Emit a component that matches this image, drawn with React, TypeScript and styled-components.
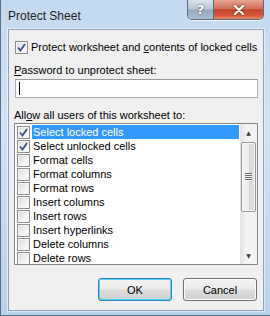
import styled, { createGlobalStyle } from "styled-components";

const GlobalStyle = createGlobalStyle`
    html, body {
        margin: 0;
        padding: 0;
        background: #c9def3;
    }
    * {
        box-sizing: border-box;
    }
`;

interface CheckProps {
    checked?: boolean;
}

interface RowProps {
    selected?: boolean;
}

interface ButtonProps {
    isDefault?: boolean;
}

const permissions = [
    { label: "Select locked cells", checked: true },
    { label: "Select unlocked cells", checked: true },
    { label: "Format cells", checked: false },
    { label: "Format columns", checked: false },
    { label: "Format rows", checked: false },
    { label: "Insert columns", checked: false },
    { label: "Insert rows", checked: false },
    { label: "Insert hyperlinks", checked: false },
    { label: "Delete columns", checked: false },
    { label: "Delete rows", checked: false },
];

const CheckBox = ({ checked }: CheckProps) => (
    <Box checked={checked}>
        {checked && (
            <svg width="9" height="9" viewBox="0 0 9 9">
                <path d="M1 4.5 L3.5 7.5 L8 1" fill="none" stroke="#3b4f8c" strokeWidth="1.8" />
            </svg>
        )}
    </Box>
);

const App = () => {
    return (
        <>
            <GlobalStyle />
            <Window>
                <TitleBar>
                    <Title>Protect Sheet</Title>
                    <Captions>
                        <HelpButton>?</HelpButton>
                        <CloseButton>
                            <svg width="12" height="10" viewBox="0 0 12 10">
                                <path d="M2 1 L10 9 M10 1 L2 9" stroke="#fff" strokeWidth="2.4" strokeLinecap="round" />
                            </svg>
                        </CloseButton>
                    </Captions>
                </TitleBar>
                <Panel>
                    <CheckLine>
                        <CheckBox checked />
                        <span>Protect worksheet and <u>c</u>ontents of locked cells</span>
                    </CheckLine>
                    <Label gap={9}><u>P</u>assword to unprotect sheet:</Label>
                    <Input>
                        <Caret />
                    </Input>
                    <Label gap={10}>All<u>o</u>w all users of this worksheet to:</Label>
                    <ListBox>
                        <Items>
                            {permissions.map((p, i) => (
                                <Row key={p.label}>
                                    <CheckBox checked={p.checked} />
                                    <RowText selected={i === 0}>{p.label}</RowText>
                                </Row>
                            ))}
                        </Items>
                        <ScrollBar>
                            <Arrow>▲</Arrow>
                            <Track>
                                <Thumb>
                                    <Grip />
                                </Thumb>
                            </Track>
                            <Arrow>▼</Arrow>
                        </ScrollBar>
                    </ListBox>
                    <Buttons>
                        <Button isDefault>OK</Button>
                        <Button>Cancel</Button>
                    </Buttons>
                </Panel>
            </Window>
        </>
    );
};

const Window = styled.div`
    width: 270px;
    height: 316px;
    display: flex;
    flex-direction: column;
    background: linear-gradient(180deg, #c4d9ef 0%, #cfe2f5 40%, #b9d2ec 100%);
    border-left: 1px solid #5b6f86;
    border-bottom: 1px solid #5b6f86;
    font-family: "Liberation Sans", Arial, sans-serif;
    font-size: 11px;
    line-height: 14px;
    color: #000;
    overflow: hidden;
`;

const TitleBar = styled.div`
    height: 28px;
    flex: none;
    display: flex;
    align-items: flex-start;
    padding-left: 7px;
`;

const Title = styled.div`
    font-size: 12px;
    line-height: 14px;
    margin-top: 9px;
    color: #1e1e1e;
`;

const Captions = styled.div`
    margin-left: auto;
    margin-right: 6px;
    display: flex;
    height: 20px;
    border: 1px solid #5d6a7b;
    border-top: none;
    border-radius: 0 0 5px 5px;
    overflow: hidden;
    box-shadow: 0 1px 0 rgba(255, 255, 255, 0.7);
`;

const HelpButton = styled.div`
    width: 26px;
    display: flex;
    align-items: center;
    justify-content: center;
    font-family: "DejaVu Sans", sans-serif;
    font-weight: bold;
    font-size: 13px;
    color: #fff;
    text-shadow: 0 0 2px #333;
    background: linear-gradient(180deg, #d9e3ec 0%, #b7c5d3 48%, #95a7ba 52%, #a9bfd3 100%);
    border-right: 1px solid #5d6a7b;
`;

const CloseButton = styled.div`
    width: 49px;
    display: flex;
    align-items: center;
    justify-content: center;
    background: linear-gradient(180deg, #e8a493 0%, #d2705c 45%, #c0452d 52%, #d6553a 80%, #e68a64 100%);
    svg {
        filter: drop-shadow(0 0 1px #6a1a0c);
    }
`;

const Panel = styled.div`
    flex: 1;
    margin: 1px 6px 4px 7px;
    background: #f0f0f0;
    border: 1px solid #8ea3bb;
    box-shadow: 0 0 0 1px rgba(255, 255, 255, 0.5);
    display: flex;
    flex-direction: column;
    padding: 0 5px;
`;

const Box = styled.span<CheckProps>`
    width: 13px;
    height: 13px;
    flex: none;
    border: 1px solid #8e8f8f;
    background: linear-gradient(135deg, #dcdcdc 0%, #f2f2f2 60%, #ffffff 100%);
    box-shadow: inset 0 0 0 1px #f4f4f4;
    display: flex;
    align-items: center;
    justify-content: center;
`;

const CheckLine = styled.div`
    flex: none;
    display: flex;
    align-items: center;
    gap: 3px;
    margin: 10px 0 0 1px;
    height: 14px;
    white-space: nowrap;
`;

const Label = styled.div<{ gap: number }>`
    flex: none;
    margin-top: ${({ gap }) => gap}px;
    height: 14px;
    white-space: nowrap;
`;

const Input = styled.div`
    flex: none;
    margin: 2px 0 0 1px;
    height: 19px;
    background: #fff;
    border: 1px solid #abadb3;
    border-top-color: #9a9a9a;
    display: flex;
    align-items: center;
    padding-left: 3px;
`;

const Caret = styled.span`
    width: 1px;
    height: 13px;
    background: #000;
`;

const ListBox = styled.div`
    flex: none;
    margin-top: 1px;
    height: 142px;
    background: #fff;
    border: 1px solid #828790;
    display: flex;
    overflow: hidden;
`;

const Items = styled.div`
    flex: 1;
    display: flex;
    flex-direction: column;
    padding: 1px 0 0 2px;
`;

const Row = styled.div`
    height: 14px;
    flex: none;
    display: flex;
    align-items: center;
    gap: 2px;
    white-space: nowrap;
`;

const RowText = styled.span<RowProps>`
    flex: 1;
    height: 14px;
    line-height: 14px;
    padding-left: 1px;
    margin-right: 1px;
    background: ${({ selected }) => (selected ? "#3399ff" : "transparent")};
    color: ${({ selected }) => (selected ? "#fff" : "#000")};
`;

const ScrollBar = styled.div`
    width: 17px;
    flex: none;
    display: flex;
    flex-direction: column;
    background: linear-gradient(90deg, #e3e3e3 0%, #f4f4f4 40%, #f2f2f2 100%);
`;

const Arrow = styled.div`
    height: 17px;
    flex: none;
    display: flex;
    align-items: center;
    justify-content: center;
    font-family: "DejaVu Sans", sans-serif;
    font-size: 6px;
    color: #3a3a3a;
`;

const Track = styled.div`
    flex: 1;
    padding: 1px 1px 0 1px;
`;

const Thumb = styled.div`
    height: 70px;
    border: 1px solid #979797;
    border-radius: 2px;
    background: linear-gradient(90deg, #f2f2f2 0%, #ebebeb 50%, #d6d6d6 55%, #e2e2e2 100%);
    box-shadow: inset 0 0 0 1px #f8f8f8;
    display: flex;
    align-items: center;
    justify-content: center;
`;

const Grip = styled.div`
    width: 7px;
    height: 8px;
    background: repeating-linear-gradient(180deg, #6a6a6a 0px, #6a6a6a 1px, #f4f4f4 1px, #f4f4f4 2px);
`;

const Buttons = styled.div`
    flex: none;
    display: flex;
    justify-content: flex-end;
    gap: 11px;
    margin-top: 13px;
    padding-right: 1px;
`;

const Button = styled.div<ButtonProps>`
    width: 74px;
    height: 23px;
    display: flex;
    align-items: center;
    justify-content: center;
    border-radius: 3px;
    border: 1px solid ${({ isDefault }) => (isDefault ? "#3c7fb1" : "#707070")};
    background: linear-gradient(180deg, #f2f2f2 0%, #ebebeb 49%, #dddddd 51%, #cfcfcf 100%);
    box-shadow: inset 0 0 0 1px ${({ isDefault }) => (isDefault ? "#48d8fb" : "#fcfcfc")};
    color: #000;
`;

export default App;
